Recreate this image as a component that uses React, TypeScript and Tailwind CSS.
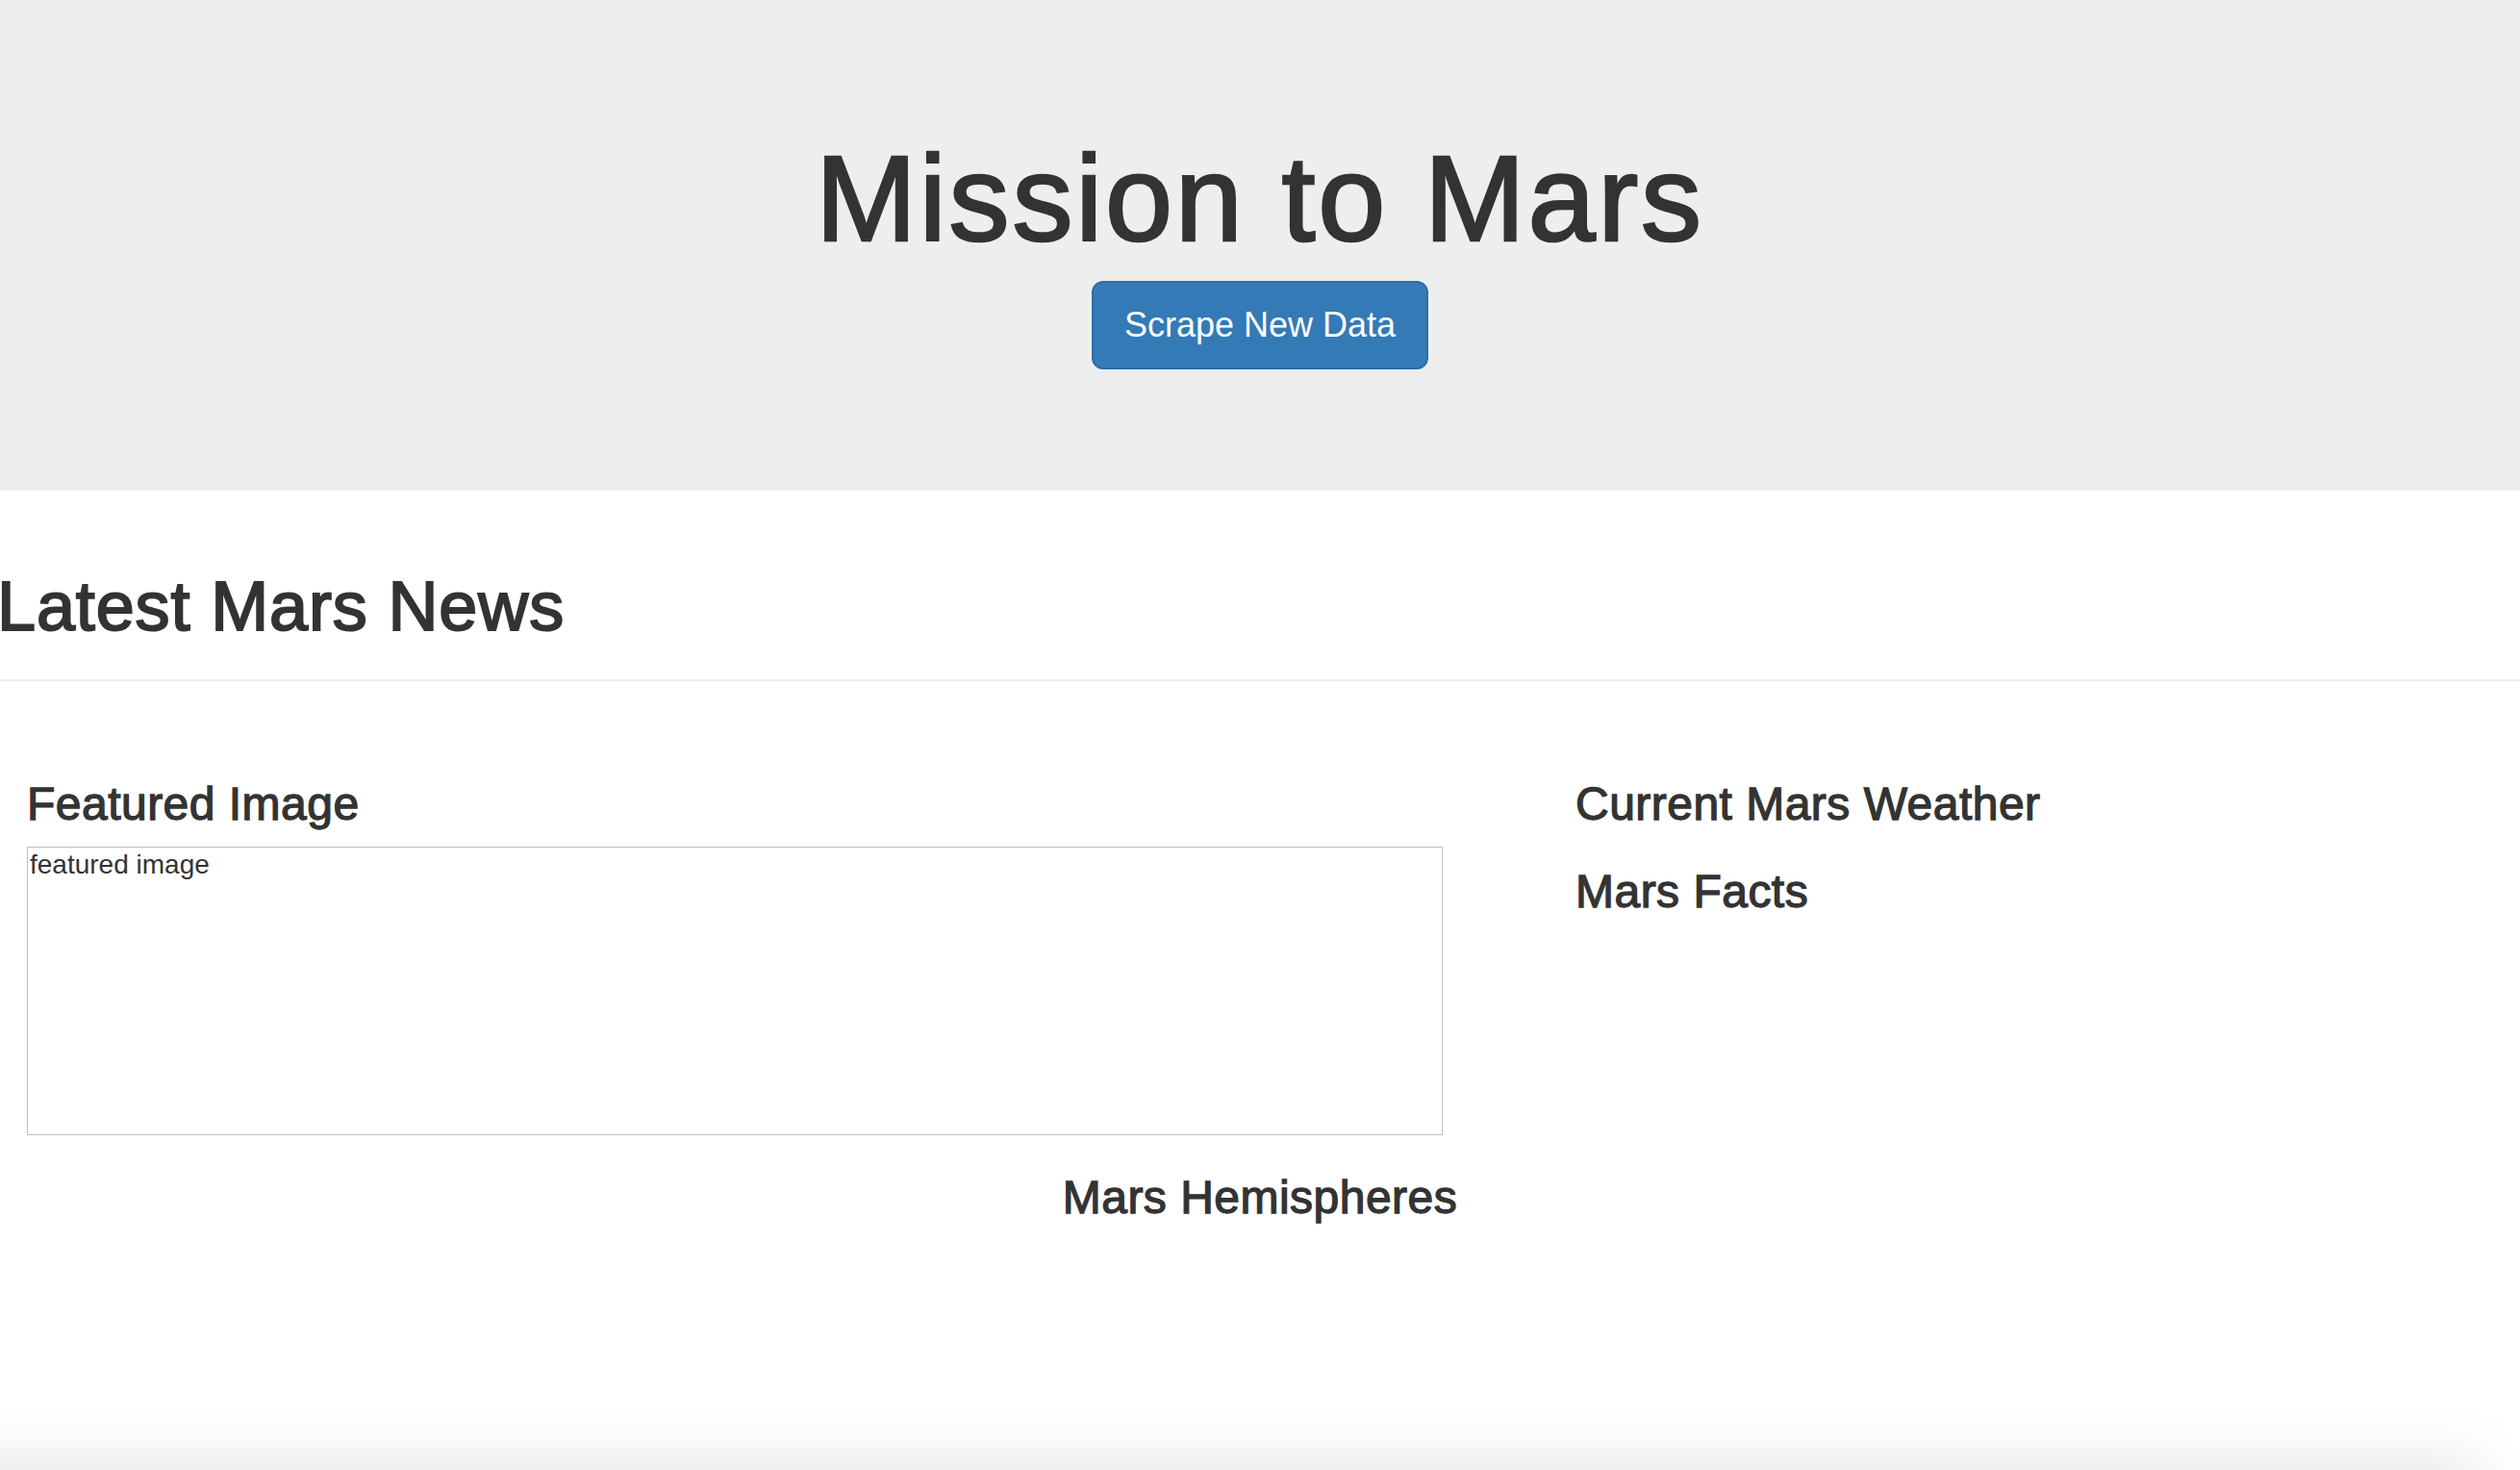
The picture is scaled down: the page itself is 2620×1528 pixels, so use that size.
import React from "react";

const Heading3 = ({ children, className = "" }: { children: React.ReactNode; className?: string }) => (
  <h3 className={`text-[48px] leading-[53px] tracking-[0.01em] [-webkit-text-stroke:1.3px_#333] ${className}`}>{children}</h3>
);

const App = () => {
  return (
    <div className="flex min-h-screen flex-col bg-white text-[#333] font-['Liberation_Sans',Arial,sans-serif]">
      {/* Jumbotron */}
      <header className="bg-[#eee] pt-[137px] pb-[126px] text-center">
        <h1 className="text-[126px] leading-[139px] tracking-[0.022em] [-webkit-text-stroke:2.5px_#333]">Mission to Mars</h1>
        <div className="mt-[16px] flex justify-center">
          <button className="rounded-[12px] border-2 border-[#2e6da4] bg-[#337ab7] px-[32px] py-[20px] text-[36px] leading-[48px] text-white">
            Scrape New Data
          </button>
        </div>
      </header>

      {/* Latest news */}
      <h1 className="-ml-[3px] mt-[81px] text-[72px] leading-[79px] tracking-[0.012em] [-webkit-text-stroke:2px_#333]">Latest Mars News</h1>
      <hr className="mt-[36px] border-t-2 border-[#eee]" />

      <div className="mt-[101px] flex">
        <div className="w-[1638px] shrink-0 pl-[28px]">
          <Heading3>Featured Image</Heading3>
          <div className="mt-[18px] h-[300px] w-[1472px] border border-[#c0c0c0] pl-[2px] pt-[2px] text-[28px] leading-[31px]">
            featured image
          </div>
        </div>
        <div className="flex-1">
          <Heading3>Current Mars Weather</Heading3>
          <Heading3 className="mt-[38px]">Mars Facts</Heading3>
        </div>
      </div>

      <Heading3 className="mt-[38px] text-center">Mars Hemispheres</Heading3>

      {/* bottom fade */}
      <div className="mt-auto h-[72px] bg-linear-to-b from-white via-[#fbfbfb] to-[#efefef] [mask-image:linear-gradient(to_left,transparent,#000_90px)]" />
    </div>
  );
};

export default App;
